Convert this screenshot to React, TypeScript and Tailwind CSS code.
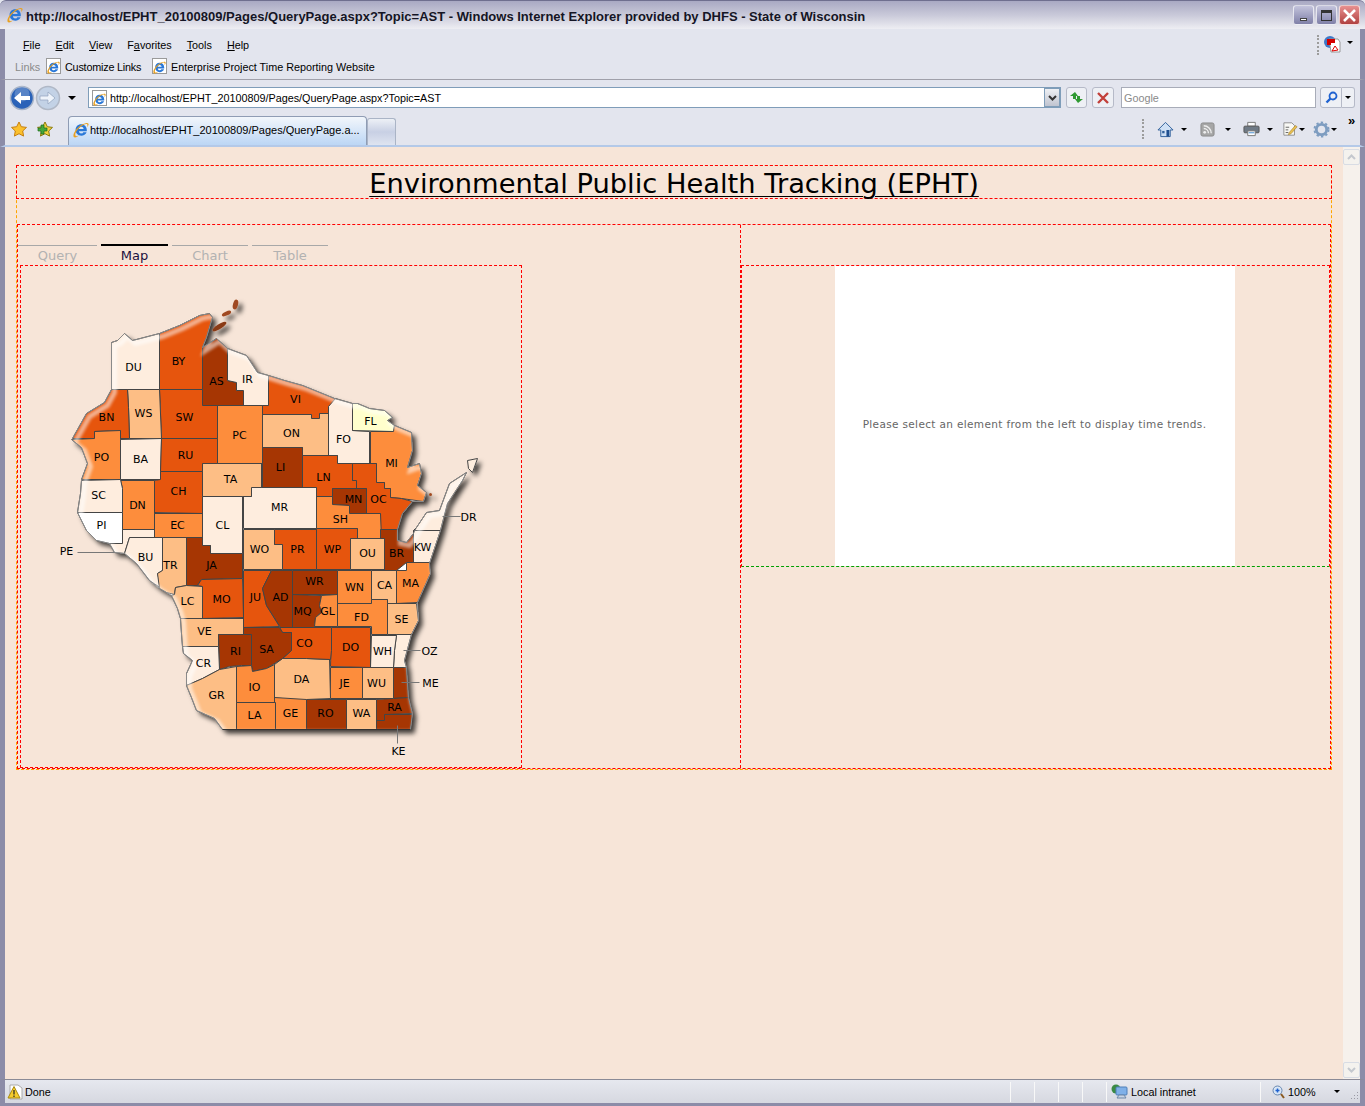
const A = "#a63603";
const M = "#e6550d";
const L = "#fd8d3c";
const P = "#fdbe85";
const W = "#feedde";

// county shapes, in page pixels (viewBox of the map starts at the panel corner)
const counties: [string, string, string][] = [
  ["DU", W, "112,342 118,340 125,333 133,340 160,333 160,389 112,389"],
  ["BY", M, "160,333 180,325 200,315 210,313 213,317 207,337 203,347 203,389 160,389"],
  ["AS", A, "203,347 217,338 228,348 228,380 237,382 237,390 244,390 244,405 203,405"],
  ["IR", W, "228,348 247,355 258,372 269,375 269,405 244,405 244,390 237,390 237,382 228,380"],
  ["VI", M, "269,375 285,380 303,385 335,398 336,405 329,406 329,413 320,413 320,418 312,418 312,414 263,414 263,405 269,405"],
  ["ON", P, "263,414 312,414 312,418 320,418 320,413 329,413 329,455 303,455 303,447 263,447"],
  ["FO", W, "329,406 336,398 353,403 353,430 370,431 370,463 338,463 338,455 329,455"],
  ["FL", "#ffffcc", "353,403 358,403 370,408 385,410 393,417 388,420 395,425 394,431 353,430"],
  ["MI", L, "371,431 394,431 395,425 412,432 413,450 408,467 420,463 422,473 418,485 427,492 424,501 402,498 391,497 391,488 385,488 385,482 377,482 377,463 371,463"],
  ["LI", A, "263,447 303,447 303,487 263,487"],
  ["LN", M, "303,455 338,455 338,463 353,463 353,480 357,480 357,488 333,488 333,496 317,496 317,487 303,487"],
  ["OC", M, "353,463 377,463 377,482 385,482 385,488 391,488 391,497 402,498 413,501 403,513 398,529 381,529 381,513 367,513 367,488 357,488 357,480 353,480"],
  ["MN", A, "333,488 367,488 367,513 350,513 350,505 333,504"],
  ["SH", L, "317,496 333,496 333,504 350,505 350,513 381,513 382,538 358,538 358,528 317,528"],
  ["MR", W, "252,487 317,487 317,528 244,528 244,496 252,496"],
  ["TA", P, "203,463 262,463 262,487 252,487 252,496 203,496"],
  ["PC", L, "218,405 263,405 263,463 218,463"],
  ["SW", M, "160,389 203,389 203,405 218,405 218,438 162,438"],
  ["WS", P, "128,389 160,389 162,438 130,438 129,407"],
  ["BN", M, "112,389 128,389 129,407 130,438 121,438 121,430 95,431 95,438 73,438 87,413 105,402"],
  ["PO", L, "72,439 95,438 95,431 121,430 121,479 82,479 88,463 82,447"],
  ["BA", W, "121,439 162,438 161,479 121,479"],
  ["RU", M, "162,438 218,438 218,463 203,463 203,471 161,471"],
  ["CH", M, "155,480 161,479 161,471 203,471 203,513 155,512"],
  ["DN", L, "121,480 155,480 155,529 123,529 123,488"],
  ["SC", W, "82,480 121,479 123,488 123,512 78,512 81,493"],
  ["PI", "#ffffff", "78,512 123,512 123,543 110,543 97,540 87,530"],
  ["PE", W, "123,529 155,529 155,537 130,537 125,553 115,552 110,543 123,543"],
  ["EC", L, "155,513 203,513 203,537 155,537"],
  ["BU", W, "130,537 163,537 163,570 158,573 162,588 150,580 137,563 125,553"],
  ["TR", P, "163,537 187,537 187,585 176,587 175,594 167,592 160,588 158,573 163,570"],
  ["CL", W, "203,496 243,496 243,553 211,553 211,545 203,545"],
  ["JA", A, "187,537 203,537 203,545 211,545 211,553 243,553 243,578 202,579 198,585 187,585"],
  ["MO", M, "202,579 243,578 244,617 203,618 203,586 198,585"],
  ["LC", P, "176,587 187,585 203,586 203,618 181,618 178,608 172,595 175,594"],
  ["VE", P, "181,618 244,618 244,634 219,634 219,646 183,646 182,633"],
  ["WO", P, "244,529 275,529 275,544 283,544 283,569 244,569"],
  ["PR", M, "275,529 317,529 317,569 283,569 283,544 275,544"],
  ["WP", M, "317,528 358,528 358,538 351,538 351,569 317,569"],
  ["OU", P, "351,538 385,538 385,569 351,569"],
  ["BR", A, "381,529 398,529 398,540 407,542 414,533 414,562 407,562 397,570 385,570 385,538 381,538"],
  ["KW", W, "414,530 441,530 430,563 414,562"],
  ["DR", W, "417,527 427,512 440,510 450,483 467,472 463,480 448,503 441,530 414,530"],
  ["DR2", W, "468,460 478,458 473,472 469,468"],
  ["JU", M, "244,570 272,570 263,588 267,605 280,626 244,627"],
  ["AD", A, "272,570 293,570 293,627 281,627 267,605 263,588"],
  ["WR", A, "293,570 338,570 338,594 293,594"],
  ["MQ", A, "293,594 322,595 320,605 322,612 316,617 315,627 293,627"],
  ["GL", L, "322,595 338,594 338,626 315,626 316,617 322,612 320,605"],
  ["WN", L, "338,570 372,570 372,603 338,603"],
  ["CA", P, "372,570 397,570 397,603 388,603 388,599 372,599"],
  ["MA", L, "397,570 407,570 407,562 430,562 431,573 418,602 397,603"],
  ["FD", L, "338,603 372,603 372,599 388,599 388,634 372,634 372,626 338,626"],
  ["SE", P, "388,603 417,603 419,620 412,634 388,634"],
  ["OZ", W, "397,634 412,634 405,660 407,667 394,667 395,650"],
  ["WH", W, "372,635 397,635 395,650 394,667 371,667"],
  ["ME", A, "394,667 407,667 409,697 394,698"],
  ["RA", A, "377,699 394,698 409,697 413,713 385,714 385,720 377,720"],
  ["KE", A, "377,720 385,720 385,714 413,714 411,729 377,729"],
  ["WA", P, "347,699 377,699 377,729 347,729"],
  ["RO", A, "307,699 347,699 347,729 307,729"],
  ["GE", L, "275,697 307,697 307,729 275,729"],
  ["JE", L, "331,667 363,667 363,698 331,698"],
  ["WU", P, "363,667 394,667 394,698 363,698"],
  ["DO", M, "332,627 371,627 371,667 331,666"],
  ["DA", P, "275,664 283,658 307,658 330,659 331,698 307,699 275,697"],
  ["CO", M, "280,627 283,632 292,632 292,650 283,658 307,658 331,659 332,650 332,627"],
  ["SA", A, "244,627 280,627 283,632 292,632 292,650 283,658 267,668 253,671 252,665 252,634 244,634"],
  ["RI", A, "219,634 252,634 252,665 242,665 230,666 220,669"],
  ["CR", W, "183,646 219,646 220,669 203,678 187,685 187,673 193,660 184,653"],
  ["GR", P, "220,669 237,666 237,729 223,729 215,718 197,710 192,697 187,685 203,678"],
  ["IO", L, "237,666 252,665 253,671 267,668 275,664 275,702 237,702"],
  ["LA", L, "237,702 276,702 276,729 237,729"],
];

const outline =
  "112,342 118,340 125,333 133,340 160,333 180,325 200,315 210,313 213,317 207,337 203,347 217,338 228,348 247,355 258,372 269,375 285,380 303,385 335,398 353,403 358,403 370,408 385,410 393,417 388,420 395,425 412,432 413,450 408,467 420,463 422,473 418,485 427,492 424,501 413,501 403,513 398,529 398,540 407,542 414,533 417,527 427,512 440,510 450,483 467,472 463,480 448,503 441,530 430,563 431,573 418,602 419,620 412,634 405,660 407,667 409,697 413,713 411,729 223,729 215,718 197,710 192,697 187,685 187,673 193,660 184,653 183,646 182,633 181,618 178,608 172,595 167,592 160,588 150,580 137,563 125,553 115,552 110,543 97,540 87,530 78,512 81,493 82,480 88,463 82,447 72,439 73,438 87,413 105,402 112,389";

const labels: [string, number, number][] = [
  ["DU", 134, 367], ["BY", 179, 361], ["AS", 217, 381], ["IR", 248, 379], ["VI", 296, 399],
  ["BN", 107, 417], ["WS", 144, 413], ["SW", 185, 417], ["PC", 240, 435], ["ON", 292, 433],
  ["FO", 344, 439], ["FL", 371, 421], ["MI", 392, 463], ["PO", 102, 457], ["BA", 141, 459],
  ["RU", 186, 455], ["TA", 231, 479], ["LI", 281, 467], ["LN", 324, 477], ["MN", 354, 499],
  ["OC", 379, 499], ["SC", 99, 495], ["CH", 179, 491], ["DN", 138, 505], ["MR", 280, 507],
  ["SH", 341, 519], ["DR", 469, 517], ["PI", 102, 525], ["EC", 178, 525], ["CL", 223, 525],
  ["PE", 67, 551], ["BU", 146, 557], ["TR", 171, 565], ["JA", 212, 565], ["WO", 260, 549],
  ["PR", 298, 549], ["WP", 333, 549], ["OU", 368, 553], ["BR", 397, 553], ["KW", 423, 547],
  ["WR", 315, 581], ["WN", 355, 587], ["CA", 385, 585], ["MA", 411, 583], ["LC", 188, 601],
  ["MO", 222, 599], ["JU", 256, 597], ["AD", 281, 597], ["MQ", 303, 611], ["GL", 328, 611],
  ["FD", 362, 617], ["SE", 402, 619], ["VE", 205, 631], ["RI", 236, 651], ["SA", 267, 649],
  ["CO", 305, 643], ["DO", 351, 647], ["WH", 383, 651], ["OZ", 430, 651], ["CR", 204, 663],
  ["IO", 255, 687], ["DA", 302, 679], ["JE", 345, 683], ["WU", 377, 683], ["ME", 431, 683],
  ["GR", 217, 695], ["LA", 255, 715], ["GE", 291, 713], ["RO", 326, 713], ["WA", 362, 713],
  ["RA", 395, 707], ["KE", 399, 751],
];

function WisconsinMap() {
  return (
    <svg width="500" height="501" viewBox="21.5 265.5 500 501" className="block">
      <defs>
        <filter id="shadow" x="-10%" y="-10%" width="125%" height="125%">
          <feDropShadow dx="4" dy="4" stdDeviation="2.5" floodColor="#000" floodOpacity="0.75" />
        </filter>
        <filter id="soft" x="-10%" y="-10%" width="120%" height="120%">
          <feGaussianBlur stdDeviation="1.6" />
        </filter>
        <clipPath id="state">
          <polygon points={outline} />
        </clipPath>
      </defs>

      <g filter="url(#shadow)">
        <polygon points={outline} fill="#fff" />
        <polygon points="468,460 478,458 473,472 469,468" fill="#fff" />
        <ellipse cx="236" cy="304" rx="2.5" ry="5" fill="#a04a20" transform="rotate(15 236 304)" />
        <ellipse cx="227" cy="313" rx="2" ry="5" fill="#a04a20" transform="rotate(65 227 313)" />
        <ellipse cx="220" cy="326" rx="2.500" ry="8" fill="#8a3a18" transform="rotate(58 220 326)" />
        <circle cx="431" cy="494" r="1.5" fill="#a04a20" />
      </g>

      {counties.map(([id, fill, points]) => (
        <polygon key={id} points={points} fill={fill} stroke="#444" strokeWidth="1" strokeLinejoin="round" />
      ))}

      {/* lit edge along the upper left of the coast */}
      <g clipPath="url(#state)">
        <polygon
          points={outline}
          fill="none"
          stroke="#fff"
          strokeWidth="5"
          opacity="0.55"
          filter="url(#soft)"
          transform="translate(3 3)"
        />
      </g>
      <polygon points={outline} fill="none" stroke="#8a8a8a" strokeWidth="1" strokeLinejoin="round" />
      <polyline points="223,729 411,729" fill="none" stroke="#333" strokeWidth="1" />

      {/* leader lines */}
      <g stroke="#777" strokeWidth="1">
        <line x1="78" y1="552" x2="115" y2="552" />
        <line x1="443" y1="516" x2="461" y2="516" />
        <line x1="404" y1="650" x2="421" y2="650" />
        <line x1="402" y1="682" x2="420" y2="682" />
        <line x1="398" y1="725" x2="398" y2="743" />
      </g>

      {labels.map(([text, x, y]) => (
        <text
          key={text}
          x={x}
          y={y}
          textAnchor="middle"
          dominantBaseline="central"
          fontSize="11"
          fill="#000"
          fontFamily="'DejaVu Sans', sans-serif"
        >
          {text}
        </text>
      ))}
    </svg>
  );
}

function IeLogo({ size = 16 }: { size?: number }) {
  return (
    <svg width={size} height={size} viewBox="0 0 16 16" className="shrink-0">
      <path d="M8.200 2.300c3.200 0 5.600 2.400 5.600 5.600v1.300H5.900c.1 1.400 1 2.200 2.300 2.200 1 0 1.700-.4 2.100-1.200h3.300c-.8 2.200-2.900 3.500-5.300 3.500-3.300 0-5.700-2.400-5.700-5.700 0-3.300 2.300-5.700 5.600-5.700zM5.900 7h4.700C10.500 5.700 9.500 4.800 8.200 4.800 7 4.800 6.100 5.700 5.900 7z" fill="#2a78d8" />
      <path d="M.8 15c-1.500-2 1.800-8.500 7-11.800 3.200-2 6.500-3 7.500-1.800.8.900-.2 2.900-1.200 3.800.4-1.400.5-2.700-.2-3.100C12.700 1.400 9 3.200 5.900 6.300 2.900 9.400 1.500 12.700 2.600 13.800c.8.700 2.400.2 3.700-.7C4.800 14.700 1.900 16.300.8 15z" fill="#e8a020" />
    </svg>
  );
}

function PageIe() {
  return (
    <span className="relative block w-[15px] h-[16px] shrink-0 bg-white border border-[#9a9a9a]">
      <span className="absolute left-[0px] top-[2px]">
        <IeLogo size={13} />
      </span>
    </span>
  );
}

function Star({ plus }: { plus?: boolean }) {
  return (
    <svg width="18" height="16" viewBox="0 0 18 16" className="shrink-0">
      <path
        d="M9 1l2.300 4.700 5.200.7-3.800 3.600.9 5.100L9 12.700 4.400 15.100l.9-5.100L1.500 6.400l5.200-.7z"
        fill={plus ? "#f4d23c" : "#fbc02d"}
        stroke={plus ? "#8a7a10" : "#c57f10"}
      />
      {plus && <path d="M2 7h3V4h3v3h3v3H8v3H5v-3H2z" fill="#45a83a" stroke="#1d6a1d" strokeWidth="0.7" />}
    </svg>
  );
}

function Caret({ className = "" }: { className?: string }) {
  return <span className={`block w-0 h-0 border-x-[3px] border-x-transparent border-t-[3px] border-t-black shrink-0 ${className}`} />;
}

function WinButton({ children, className }: { children?: React.ReactNode; className: string }) {
  return (
    <div className={`w-[21px] h-[20px] rounded-[3px] border border-white/70 flex items-center justify-center ${className}`}>
      {children}
    </div>
  );
}

function Grip() {
  return <span className="block w-[2px] h-[20px] shrink-0 border-l-2 border-dotted border-[#9c9c9c]" />;
}

function App() {
  return (
    <div className="w-[1365px] h-[1106px] overflow-hidden flex flex-col bg-[#e3e5ee] font-['Liberation_Sans',sans-serif] text-[10.800px] text-black">
      {/* title bar */}
      <div className="h-[29px] shrink-0 flex items-center pl-[7px] pr-[5px] gap-[3px] rounded-t-[6px] border-t border-[#6f6f8f] bg-gradient-to-b from-[#a9a9c3] via-[#c9c9d9] to-[#eeeef3]">
        <IeLogo />
        <span className="font-bold text-[13px] leading-none whitespace-nowrap text-[#151525] pt-[3px]">
          http://localhost/EPHT_20100809/Pages/QueryPage.aspx?Topic=AST - Windows Internet Explorer provided by DHFS - State of Wisconsin
        </span>
        <div className="ml-auto flex gap-[2px]">
          <WinButton className="bg-gradient-to-b from-[#c4c4dc] to-[#8080a8]">
            <span className="block w-[7px] h-[3px] mt-[9px] bg-white border border-[#444]" />
          </WinButton>
          <WinButton className="bg-gradient-to-b from-[#c4c4dc] to-[#8080a8]">
            <span className="block w-[11px] h-[11px] border border-[#333] border-t-[3px]" />
          </WinButton>
          <WinButton className="bg-gradient-to-b from-[#e89090] to-[#b04040] text-white text-[17px] font-bold leading-none">
            <svg width="13" height="13" viewBox="0 0 13 13">
              <path d="M1 1l11 11M12 1L1 12" stroke="#fff" strokeWidth="2.600" />
            </svg>
          </WinButton>
        </div>
      </div>

      {/* menu and links */}
      <div className="h-[51px] shrink-0 border-l-[5px] border-r-[5px] border-[#8c8ca8] border-b border-b-[#a0a0aa] flex">
        <div className="flex-1 flex flex-col pl-[13px]">
          <div className="h-[26px] flex items-center gap-[15px] pl-[5px] pt-[7px]">
            <span><span className="underline">F</span>ile</span>
            <span><span className="underline">E</span>dit</span>
            <span><span className="underline">V</span>iew</span>
            <span>F<span className="underline">a</span>vorites</span>
            <span><span className="underline">T</span>ools</span>
            <span><span className="underline">H</span>elp</span>
          </div>
          <div className="h-[22px] flex items-center">
            <span className="text-[#8a8a8a] w-[31px] -ml-[3px] pt-[2px]">Links</span>
            <PageIe />
            <span className="ml-[4px] w-[76px] whitespace-nowrap tracking-[-0.2px] pt-[2px]">Customize Links</span>
            <span className="w-[11px]" />
            <PageIe />
            <span className="ml-[4px] pt-[2px]">Enterprise Project Time Reporting Website</span>
          </div>
        </div>
        <div className="flex items-start gap-[4px] pt-[6px] pr-[7px]">
          <Grip />
          <svg width="18" height="18" viewBox="0 0 18 18">
            <circle cx="7" cy="7" r="6" fill="#3f78c8" />
            <path d="M6 4h9l2 3v10H8z" fill="#fff" stroke="#999" />
            <path d="M4 4h8v4H8v2H4z" fill="#d40000" />
            <path d="M9 16l3-5 3 4z" fill="none" stroke="#e00000" />
          </svg>
          <Caret className="mt-[6px] ml-[2px]" />
        </div>
      </div>

      {/* address row */}
      <div className="h-[33px] shrink-0 border-l-[5px] border-r-[5px] border-[#8c8ca8] flex items-center pl-[4px] pr-[5px] pt-[2px]">
        <svg width="26" height="26" viewBox="0 0 26 26" className="shrink-0">
          <circle cx="13" cy="13" r="11.500" fill="#2a62b8" stroke="#a8b4c8" strokeWidth="1.500" />
          <circle cx="13" cy="9" r="7.500" fill="#fff" opacity="0.22" />
          <path d="M5 13l7-6v4h9v4h-9v4z" fill="#fff" />
        </svg>
        <svg width="26" height="26" viewBox="0 0 26 26" className="shrink-0">
          <circle cx="13" cy="13" r="11.500" fill="#c3d2e6" stroke="#b0b8c6" strokeWidth="1.500" />
          <path d="M20 13l-7-6v4H5v4h8v4z" fill="#eef3fa" stroke="#8fa2bc" strokeWidth="0.700" />
        </svg>
        <Caret className="ml-[7px] border-x-[4px] border-t-[4px]" />
        <div className="ml-[12px] h-[21px] w-[973px] shrink-0 bg-white border border-[#7f9db9] flex items-center pl-[3px]">
          <PageIe />
          <span className="ml-[3px] pt-[2px]">http://localhost/EPHT_20100809/Pages/QueryPage.aspx?Topic=AST</span>
          <div className="ml-auto w-[16px] h-[19px] bg-gradient-to-b from-[#eef0f4] to-[#c0c4d0] border border-[#7f9db9] flex items-center justify-center">
            <svg width="9" height="6" viewBox="0 0 9 6"><path d="M1 1l3.500 3.500L8 1" fill="none" stroke="#333" strokeWidth="2" /></svg>
          </div>
        </div>
        <div className="ml-[5px] w-[21px] h-[21px] rounded-[3px] border border-[#b6bac8] bg-[#eef0f5] flex items-center justify-center">
          <svg width="15" height="13" viewBox="0 0 15 13">
            <path d="M6 1L1 5h3v3h3V5h2zM9 12l5-4h-3V5H8v3H6z" fill="#2f9a32" />
          </svg>
        </div>
        <div className="ml-[5px] w-[22px] h-[21px] rounded-[3px] border border-[#b6bac8] bg-[#eef0f5] flex items-center justify-center">
          <svg width="12" height="12" viewBox="0 0 12 12">
            <path d="M1 1l10 10M11 1L1 11" stroke="#c2403a" strokeWidth="2.400" />
          </svg>
        </div>
        <div className="ml-[7px] w-[195px] h-[21px] bg-white border border-[#a8acb8] flex items-center pl-[2px] pt-[2px] text-[#8a8a8a]">
          Google
        </div>
        <div className="ml-[4px] w-[22px] h-[21px] rounded-l-[3px] border border-[#b6bac8] bg-[#eef0f5] flex items-center justify-center">
          <svg width="13" height="13" viewBox="0 0 13 13">
            <circle cx="8" cy="5" r="3.500" fill="none" stroke="#1f62d0" strokeWidth="1.800" />
            <path d="M5.500 7.500L1.500 11.500" stroke="#1f62d0" strokeWidth="2.400" />
          </svg>
        </div>
        <div className="w-[13px] h-[21px] rounded-r-[3px] border border-l-0 border-[#b6bac8] bg-[#eef0f5] flex items-center justify-center">
          <Caret className="border-t-[#1f62d0]" />
        </div>
      </div>

      {/* tab row */}
      <div className="h-[34px] shrink-0 border-l-[5px] border-r-[5px] border-[#8c8ca8] border-b-[2px] border-b-[#b4c9e8] flex items-end">
        <div className="flex items-center gap-[8px] self-center pl-[5px] w-[63px] shrink-0">
          <Star />
          <Star plus />
        </div>
        <div className="w-[299px] h-[29px] shrink-0 rounded-t-[4px] border border-b-0 border-[#8f9cb4] bg-gradient-to-b from-[#f2f6fb] to-[#bcd6f5] flex items-center pl-[4px] pb-[2px] gap-[1px] text-[11px]">
          <IeLogo />
          <span className="whitespace-nowrap">http://localhost/EPHT_20100809/Pages/QueryPage.a...</span>
        </div>
        <div className="w-[29px] h-[27px] shrink-0 rounded-t-[3px] border border-b-0 border-[#aab4c6] bg-gradient-to-b from-[#edf0f6] via-[#c8d0e4] to-[#dfe4f0]" />
        <div className="ml-auto flex items-center self-center">
          <Grip />
          <svg width="17" height="17" viewBox="0 0 18 17" className="ml-[13px] shrink-0">
            <path d="M9 1L1 9h3v7h10V9h3z" fill="#cfe0f5" stroke="#2f5f9a" />
            <path d="M10 9h3v7h-3z" fill="#1f4f90" />
            <path d="M5.500 10h2.500v2.500H5.500z" fill="#2f5f9a" />
          </svg>
          <Caret className="ml-[7px]" />
          <svg width="15" height="15" viewBox="0 0 16 16" className="ml-[13px] shrink-0">
            <rect width="14" height="14" x="1" y="1" rx="2" fill="#a6a6a6" stroke="#8a8a8a" />
            <circle cx="5" cy="11" r="1.500" fill="#eee" />
            <path d="M4 7a5 5 0 0 1 5 5M4 4a8 8 0 0 1 8 8" fill="none" stroke="#eee" strokeWidth="1.500" />
          </svg>
          <Caret className="ml-[10px] border-t-[#b4b4b4]" />
          <svg width="17" height="16" viewBox="0 0 18 16" className="ml-[12px] shrink-0">
            <path d="M5 1h8v4H5z" fill="#fff" stroke="#777" />
            <rect x="1" y="5" width="16" height="7" rx="1" fill="#6f7a86" stroke="#555" />
            <path d="M5 10h8v5H5z" fill="#fff" stroke="#777" />
            <path d="M6 12h6" stroke="#3f88d0" />
          </svg>
          <Caret className="ml-[7px]" />
          <svg width="15" height="16" viewBox="0 0 17 16" className="ml-[10px] shrink-0">
            <path d="M1 1h9l3 3v11H1z" fill="#f8f8f4" stroke="#888" />
            <path d="M3 6h4M3 9h3M3 12h3" stroke="#555" />
            <path d="M7 12l7-8 2 1.500-7 8-3 1z" fill="#e8c050" stroke="#a07820" strokeWidth="0.600" />
          </svg>
          <Caret className="ml-[1px]" />
          <svg width="17" height="17" viewBox="0 0 18 18" className="ml-[8px] shrink-0">
            <circle cx="9" cy="9" r="5.500" fill="none" stroke="#7d9cc0" strokeWidth="3" />
            <circle cx="9" cy="9" r="7.500" fill="none" stroke="#7d9cc0" strokeWidth="2" strokeDasharray="2.500 2.400" />
          </svg>
          <Caret className="ml-[1px]" />
          <span className="ml-[11px] w-[12px] -mt-[18px] text-[13px] leading-none font-bold">»</span>
        </div>
      </div>

      {/* page */}
      <div className="flex-1 min-h-0 flex border-l-[5px] border-r-[5px] border-[#8c8ca8]">
        <div className="flex-1 bg-[#f7e5d8] pt-[18px] pl-[11px]">
          <div className="w-[1316px] h-[605px] border border-dashed border-[#ffa500] flex flex-col font-['DejaVu_Sans',sans-serif]">
            <div className="h-[34px] -m-[1px] mb-0 border border-dashed border-[#ff0000] flex items-center justify-center shrink-0">
              <span className="text-[27.300px] leading-none underline underline-offset-[3px] decoration-1 whitespace-nowrap text-black pt-[4px]">
                Environmental Public Health Tracking (EPHT)
              </span>
            </div>
            <div className="h-[25px] shrink-0" />
            <div className="flex-1 flex min-h-0 border border-dashed border-[#ff0000]">
              <div className="w-[723px] shrink-0 border-r border-dashed border-[#ff0000] pl-[2px]">
                <div className="h-[40px] pt-[20px] flex gap-[4px] text-[13px] text-[#b2b2b2] -ml-[2px]">
                  <div className="w-[79px] h-[20px] border-t border-[#a8a8a8] text-center leading-[20px]">Query</div>
                  <div className="w-[67px] h-[20px] border-t-2 -mt-[1px] border-black text-center leading-[20px] text-[#1a1040]">Map</div>
                  <div className="w-[76px] h-[20px] border-t border-[#a8a8a8] text-center leading-[20px]">Chart</div>
                  <div className="w-[76px] h-[20px] border-t border-[#a8a8a8] text-center leading-[20px]">Table</div>
                </div>
                <div className="w-[502px] h-[503px] border border-dashed border-[#ff0000]">
                  <WisconsinMap />
                </div>
              </div>
              <div className="flex-1 pt-[40px]">
                <div className="h-[302px] border border-dashed border-[#ff0000] border-b-[#00a000] flex justify-center pr-[2px]">
                  <div className="w-[400px] h-[300px] bg-white flex items-center justify-center text-[10.500px] tracking-[0.35px] text-[#666] whitespace-nowrap pt-[18px]">
                    Please select an element from the left to display time trends.
                  </div>
                </div>
              </div>
            </div>
          </div>
        </div>
        {/* scrollbar */}
        <div className="w-[17px] shrink-0 bg-[#f6f1ec] pt-[2px] pb-[1px] flex flex-col justify-between">
          <div className="h-[16px] border border-[#d8dce4] rounded-[2px] bg-[#f4f2ee] flex items-center justify-center">
            <svg width="9" height="6" viewBox="0 0 9 6"><path d="M1 5l3.500-3.500L8 5" fill="none" stroke="#c4c8ce" strokeWidth="2" /></svg>
          </div>
          <div className="h-[16px] border border-[#d8dce4] rounded-[2px] bg-[#f4f2ee] flex items-center justify-center">
            <svg width="9" height="6" viewBox="0 0 9 6"><path d="M1 1l3.500 3.500L8 1" fill="none" stroke="#c4c8ce" strokeWidth="2" /></svg>
          </div>
        </div>
      </div>

      {/* status bar */}
      <div className="h-[27px] shrink-0 border-x-[5px] border-[#8c8ca8] border-b-[3px] border-b-[#8c8ca8] border-t border-t-[#8a8a96] bg-gradient-to-b from-[#e6e8ef] to-[#d6d8e0] flex items-center">
        <svg width="16" height="16" viewBox="0 0 16 16" className="ml-[2px] shrink-0">
          <path d="M3 1h8l4 3v11H3z" fill="#fff" stroke="#aaa" />
          <path d="M7 2.500L13 14H1z" fill="#f6cc2c" stroke="#a98a10" />
          <path d="M6.400 6h1.200v4.500H6.400zM6.400 11.500h1.200V13H6.400z" fill="#222" />
        </svg>
        <span className="ml-[2px] pt-[2px]">Done</span>
        <div className="ml-auto flex items-center h-full">
          {[0, 1, 2, 3].map((i) => (
            <div key={i} className="w-[24px] h-[20px] border-l border-[#f8f8f8]" />
          ))}
          <div className="w-[154px] h-[20px] border-l border-[#f8f8f8] flex items-center pl-[4px] gap-[3px]">
            <svg width="17" height="16" viewBox="0 0 17 16" className="shrink-0">
              <circle cx="5" cy="5" r="4.500" fill="#3a8a44" />
              <rect x="5" y="3" width="11" height="8" rx="1" fill="#7fb0e8" stroke="#4f7fb8" />
              <path d="M8 11h5l2 3H6z" fill="#c8d4e4" stroke="#6f88a8" />
            </svg>
            <span className="pt-[2px]">Local intranet</span>
          </div>
          <div className="w-[100px] h-[20px] border-l border-[#f8f8f8] flex items-center pl-[11px] gap-[3px]">
            <svg width="13" height="14" viewBox="0 0 13 14" className="shrink-0">
              <circle cx="5.500" cy="5.500" r="4.500" fill="#d8e6f6" stroke="#6a88b0" />
              <path d="M3.500 5.500h4M5.500 3.500v4" stroke="#1f62d0" strokeWidth="1.500" />
              <path d="M9 9l3 4" stroke="#8a5a20" strokeWidth="2" />
            </svg>
            <span className="pt-[2px]">100%</span>
            <Caret className="ml-[15px]" />
            <svg width="10" height="10" viewBox="0 0 10 10" className="ml-auto mt-[8px] mr-[1px] shrink-0">
              <path d="M8 1h1v1H8zM5 4h1v1H5zM8 4h1v1H8zM2 7h1v1H2zM5 7h1v1H5zM8 7h1v1H8z" fill="#9a9aa4" />
            </svg>
          </div>
        </div>
      </div>
    </div>
  );
}

export default App;
